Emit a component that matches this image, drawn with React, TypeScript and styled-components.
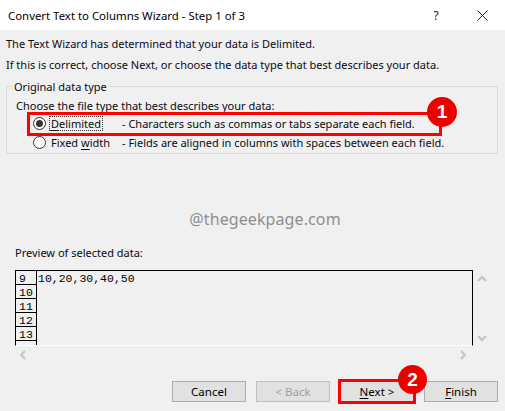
import React from 'react';
import styled, { createGlobalStyle } from 'styled-components';

const GlobalStyle = createGlobalStyle`
  html, body {
    margin: 0;
    padding: 0;
    background: #f0f0f0;
  }
  * { box-sizing: border-box; }
`;

const UI_FONT = `"Noto Sans", "Open Sans", sans-serif`;

const Dialog = styled.div`
  width: 505px;
  height: 411px;
  background: #f0f0f0;
  display: flex;
  flex-direction: column;
  font-family: ${UI_FONT};
  font-size: 11px;
  color: #0a0a14;
  overflow: hidden;
`;

const TitleBar = styled.div`
  height: 30px;
  background: #fff;
  display: flex;
  align-items: center;
  padding-left: 8px;
  font-size: 11.4px;
  color: #000;
`;

const Title = styled.div`
  flex: 1;
`;

const TitleButton = styled.div<{ $w: number }>`
  width: ${(p) => p.$w}px;
  height: 30px;
  display: flex;
  align-items: center;
  justify-content: center;
  color: #222;
  font-size: 12px;
`;

const Body = styled.div`
  flex: 1;
  padding: 6px 7px 0 6px;
  display: flex;
  flex-direction: column;
`;

const Line = styled.div<{ $mt?: number; $ml?: number }>`
  line-height: 16px;
  margin-top: ${(p) => p.$mt ?? 0}px;
  margin-left: ${(p) => p.$ml ?? 0}px;
  white-space: nowrap;
`;

const Group = styled.div`
  position: relative;
  margin-top: 13px;
  padding: 0 0 1px 8px;
  border: 1px solid #dcdcdc;
`;

const Legend = styled.div`
  width: fit-content;
  margin: -8px 0 3px -3px;
  padding: 0 2px;
  line-height: 16px;
  background: #f0f0f0;
`;

const RadioRow = styled.div`
  height: 19px;
  display: grid;
  grid-template-columns: 17px 72px 1fr;
  align-items: center;
  padding-left: 18px;
  white-space: nowrap;
`;

const Radio = styled.span<{ $checked?: boolean }>`
  width: 13px;
  height: 13px;
  border-radius: 50%;
  border: 1px solid #333;
  background: #fff;
  display: flex;
  align-items: center;
  justify-content: center;
  &::after {
    content: '';
    width: 7px;
    height: 7px;
    border-radius: 50%;
    background: #333;
    display: ${(p) => (p.$checked ? 'block' : 'none')};
  }
`;

const OptionLabel = styled.span<{ $focus?: boolean }>`
  justify-self: start;
  padding: 0 1px;
  line-height: 13px;
  outline: ${(p) => (p.$focus ? '1px dotted #333' : 'none')};
`;

const U = styled.span`
  text-decoration: underline;
  text-underline-offset: 2px;
`;

const Highlight = styled.div`
  position: absolute;
  left: 20px;
  top: 25px;
  width: 415px;
  height: 24px;
  border: 3px solid #f00;
  pointer-events: none;
`;

const Badge = styled.div<{ $size: number }>`
  position: absolute;
  width: ${(p) => p.$size}px;
  height: ${(p) => p.$size}px;
  border-radius: 50%;
  background: #ee0000;
  color: #fff;
  font-family: "Liberation Sans", Arial, sans-serif;
  font-weight: bold;
  font-size: 19px;
  display: flex;
  align-items: center;
  justify-content: center;
`;

const WatermarkArea = styled.div`
  height: 91px;
  display: flex;
  justify-content: center;
  padding: 52px 0 0 26px;
`;

const Watermark = styled.div`
  font-size: 16px;
  line-height: 26px;
  height: 26px;
  color: #8f8f8f;
  letter-spacing: 0.1px;
`;

const PreviewWrap = styled.div`
  margin-top: 9px;
  display: grid;
  grid-template-columns: 458px 1fr;
  margin-left: 9px;
`;

const PreviewBox = styled.div`
  height: 76px;
  border: 1px solid #000;
  border-bottom: 1px solid #fff;
  overflow: hidden;
  font-family: "Liberation Mono", "Courier New", monospace;
  font-size: 11.5px;
  color: #000;
`;

const PreviewRow = styled.div`
  display: flex;
  height: 14px;
`;

const RowNum = styled.div`
  width: 21px;
  border-right: 1px solid #000;
  border-bottom: 1px solid #000;
  padding-left: 3px;
  line-height: 15px;
`;

const RowData = styled.div`
  padding-left: 1px;
  line-height: 15px;
`;

const VScroll = styled.div`
  display: flex;
  flex-direction: column;
  justify-content: space-between;
  align-items: center;
  padding: 5px 0 4px 0;
  width: 18px;
`;

const HScroll = styled.div`
  grid-column: 1;
  display: flex;
  justify-content: space-between;
  padding: 4px 6px 0 4px;
  height: 14px;
`;

const Chevron = ({ dir }: { dir: 'up' | 'down' | 'left' | 'right' }) => {
  const d = {
    up: 'M1 6 L5 2 L9 6',
    down: 'M1 2 L5 6 L9 2',
    left: 'M6 1 L2 5 L6 9',
    right: 'M2 1 L6 5 L2 9',
  }[dir];
  const vertical = dir === 'up' || dir === 'down';
  return (
    <svg width={vertical ? 10 : 8} height={vertical ? 8 : 10} viewBox={vertical ? '0 0 10 8' : '0 0 8 10'}>
      <path d={d} fill="none" stroke="#c4c4c4" strokeWidth={2} />
    </svg>
  );
};

const ButtonRow = styled.div`
  position: relative;
  margin-top: 21px;
  display: flex;
  justify-content: flex-end;
  gap: 10px;
`;

const Button = styled.div<{ $disabled?: boolean; $marked?: boolean }>`
  width: 74px;
  height: 21px;
  background: #e1e1e1;
  border: 1px solid ${(p) => (p.$disabled ? '#bfbfbf' : '#adadad')};
  color: ${(p) => (p.$disabled ? '#a0a0a0' : '#000')};
  display: flex;
  align-items: center;
  justify-content: center;
  font-size: 11.5px;
  outline: ${(p) => (p.$marked ? '3px solid #f00' : 'none')};
  outline-offset: -1px;
`;

const previewRows: Array<[string, string]> = [
  ['9', '10,20,30,40,50'],
  ['10', ''],
  ['11', ''],
  ['12', ''],
  ['13', ''],
  ['', ''],
];

export default function App() {
  return (
    <>
      <GlobalStyle />
      <Dialog>
        <TitleBar>
          <Title>Convert Text to Columns Wizard - Step 1 of 3</Title>
          <TitleButton $w={46}>?</TitleButton>
          <TitleButton $w={46}>
            <svg width="11" height="11" viewBox="0 0 11 11">
              <path d="M0.5 0.5 L10.5 10.5 M10.5 0.5 L0.5 10.5" stroke="#222" strokeWidth={1} />
            </svg>
          </TitleButton>
        </TitleBar>
        <Body>
          <Line>The Text Wizard has determined that your data is Delimited.</Line>
          <Line $mt={5}>If this is correct, choose Next, or choose the data type that best describes your data.</Line>
          <Group>
            <Legend>Original data type</Legend>
            <Line $ml={1}>Choose the file type that best describes your data:</Line>
            <RadioRow>
              <Radio $checked />
              <OptionLabel $focus>
                <U>D</U>elimited
              </OptionLabel>
              <span>- Characters such as commas or tabs separate each field.</span>
            </RadioRow>
            <RadioRow>
              <Radio />
              <OptionLabel>
                Fixed <U>w</U>idth
              </OptionLabel>
              <span>- Fields are aligned in columns with spaces between each field.</span>
            </RadioRow>
            <Highlight />
            <Badge $size={30} style={{ left: 420, top: 10 }}>1</Badge>
          </Group>
          <WatermarkArea>
            <Watermark>@thegeekpage.com</Watermark>
          </WatermarkArea>
          <Line $ml={9}>Preview of selected data:</Line>
          <PreviewWrap>
            <PreviewBox>
              {previewRows.map(([n, v], i) => (
                <PreviewRow key={i}>
                  <RowNum>{n}</RowNum>
                  <RowData>{v}</RowData>
                </PreviewRow>
              ))}
            </PreviewBox>
            <VScroll>
              <Chevron dir="up" />
              <Chevron dir="down" />
            </VScroll>
            <HScroll>
              <Chevron dir="left" />
              <Chevron dir="right" />
            </HScroll>
          </PreviewWrap>
          <ButtonRow>
            <Button>Cancel</Button>
            <Button $disabled>&lt; Back</Button>
            <Button $marked>
              <span>
                <U>N</U>ext &gt;
              </span>
            </Button>
            <Button>
              <span>
                <U>F</U>inish
              </span>
            </Button>
            <Badge $size={29} style={{ left: 392, top: -16 }}>2</Badge>
          </ButtonRow>
        </Body>
      </Dialog>
    </>
  );
}
